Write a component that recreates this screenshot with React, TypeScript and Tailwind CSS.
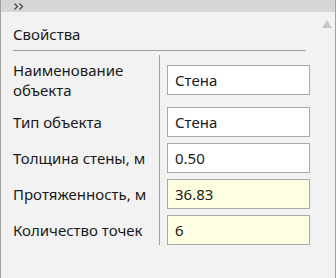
export default function App() {
  const rows = [
    { label: 'Наименование объекта', value: 'Стена', readOnly: false },
    { label: 'Тип объекта', value: 'Стена', readOnly: false },
    { label: 'Толщина стены, м', value: '0.50', readOnly: false },
    { label: 'Протяженность, м', value: '36.83', readOnly: true },
    { label: 'Количество точек', value: '6', readOnly: true },
  ];

  return (
    <div
      className="w-[336px] h-[278px] bg-[#f2f2f2] border-x border-[#a0a0a0] flex flex-col text-[#1a1a1a] relative"
      style={{ fontFamily: '"Noto Sans", "Open Sans", sans-serif' }}
    >
      {/* Header strip with expand chevrons */}
      <div className="h-[12px] bg-[#d6d6d6] flex items-center pl-[13px]">
        <svg width="10" height="7" viewBox="0 0 10 7" fill="none" stroke="#444" strokeWidth="1.2">
          <polyline points="0.5,0.5 3.5,3.5 0.5,6.5" />
          <polyline points="5.5,0.5 8.5,3.5 5.5,6.5" />
        </svg>
      </div>

      <div className="pl-[12px] pr-[29px]">
        {/* Title */}
        <div className="pt-[12px] pb-[6px] border-b border-[#a0a0a0] text-[15px] leading-[20px]">
          Свойства
        </div>

        {/* Properties */}
        <div className="mt-[9px] grid grid-cols-[146px_1fr] relative">
          <div className="absolute left-[146px] -top-[5px] bottom-0 w-px bg-[#a0a0a0]" />
          {rows.map((row, i) => {
            const gap = i === 0 ? '' : i === 1 ? 'mt-[7px]' : 'mt-[6px]';
            return (
              <div key={i} className="contents">
                <div className={`flex items-center text-[15px] leading-[20px] ${gap}`}>
                  {row.label}
                </div>
                <div className={`flex items-center pl-[8px] ${gap}`}>
                  <div
                    className={`w-[143px] h-[30px] border border-[#a9a9a9] flex items-center px-[7px] text-[15px] ${
                      row.readOnly ? 'bg-[#ffffe1]' : 'bg-white'
                    }`}
                  >
                    {row.value}
                  </div>
                </div>
              </div>
            );
          })}
        </div>
      </div>

      {/* Scroll arrow */}
      <div className="absolute left-[321px] top-[20px]">
        <svg width="10" height="8" viewBox="0 0 10 8">
          <polygon points="5,0 10,8 0,8" fill="#c8c8c8" />
        </svg>
      </div>
    </div>
  );
}
